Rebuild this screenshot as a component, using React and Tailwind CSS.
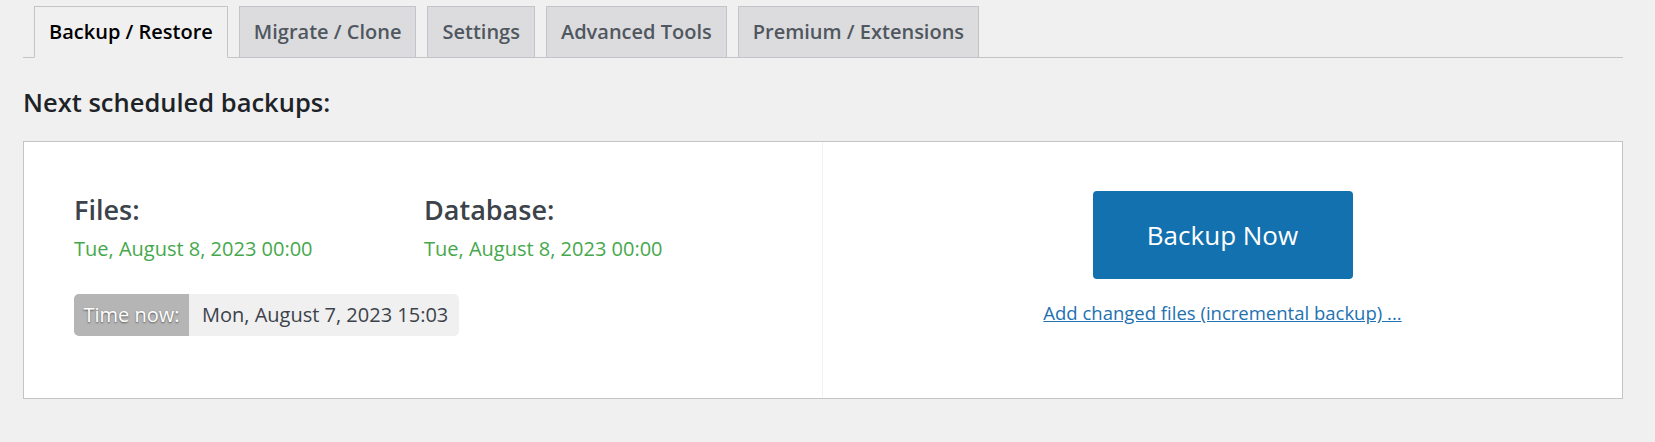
export default function App() {
  const tabs = ['Backup / Restore', 'Migrate / Clone', 'Settings', 'Advanced Tools', 'Premium / Extensions'];

  return (
    <div className="min-h-[442px] w-[1655px] bg-[#f0f0f1] font-['Open_Sans',sans-serif] text-[#3c434a]">
      <div className="ml-[23px] w-[1600px] pt-[6px]">
        {/* tabs */}
        <div className="flex gap-[11px] border-b border-[#c3c4c7] pl-[11px]">
          {tabs.map((t, i) => (
            <div
              key={t}
              className={
                'mb-[-1px] flex h-[52px] items-center border border-[#c3c4c7] px-[14px] text-[20px] font-semibold ' +
                (i === 0 ? 'border-b-[#f0f0f1] bg-[#f0f0f1] text-black' : 'bg-[#dcdcde] text-[#50575e]')
              }
            >
              {t}
            </div>
          ))}
        </div>

        <h2 className="mt-[27px] text-[25.5px] font-semibold leading-[34px] text-[#1d2327]">Next scheduled backups:</h2>

        {/* schedule card */}
        <div className="mt-[22px] grid h-[258px] grid-cols-2 border border-[#c3c4c7] bg-white">
          <div className="border-r border-[#f0f0f1] pl-[50px] pt-[50px]">
            <div className="flex">
              <div className="w-[350px]">
                <div className="text-[27px] font-semibold leading-[36px] text-[#3c434a]">Files:</div>
                <div className="mt-[8px] text-[20px] leading-[26px] text-[#46a84c]">Tue, August 8, 2023 00:00</div>
              </div>
              <div>
                <div className="text-[27px] font-semibold leading-[36px] text-[#3c434a]">Database:</div>
                <div className="mt-[8px] text-[20px] leading-[26px] text-[#46a84c]">Tue, August 8, 2023 00:00</div>
              </div>
            </div>
            <div className="mt-[32px] flex h-[42px] w-[385px] items-stretch overflow-hidden rounded-[5px] bg-[#f0f0f0] text-[20px]">
              <div className="flex w-[115px] items-center justify-center bg-[#b5b5b5] text-white [text-shadow:0_1px_2px_rgba(0,0,0,0.5)]">
                Time now:
              </div>
              <div className="ml-[2px] flex items-center pl-[11px] text-[#3c434a]">Mon, August 7, 2023 15:03</div>
            </div>
          </div>

          <div className="flex flex-col items-center pt-[49px]">
            <button className="flex h-[88px] w-[260px] items-center justify-center rounded-[4px] bg-[#1271ae] text-[26px] text-white">
              Backup Now
            </button>
            <a href="#" className="mt-[21px] text-[18.5px] leading-[26px] text-[#2271b1] underline">
              Add changed files (incremental backup) ...
            </a>
          </div>
        </div>
      </div>
    </div>
  );
}
